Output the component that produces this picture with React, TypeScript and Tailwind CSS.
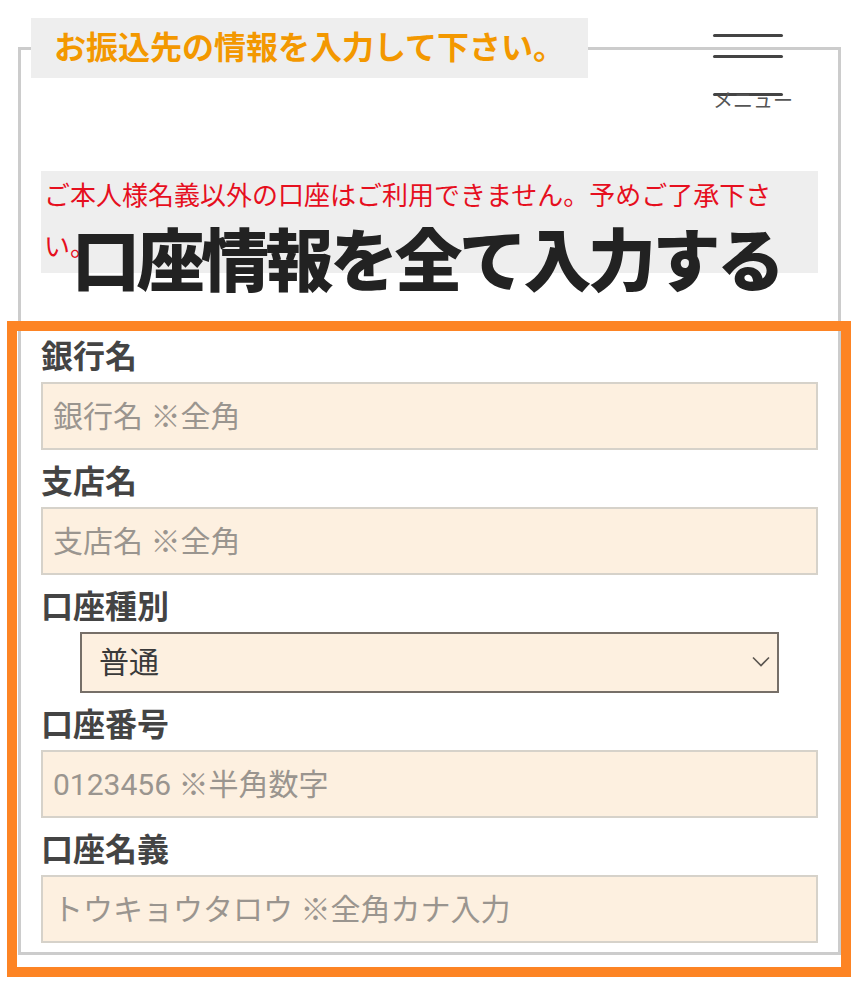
import React from "react";

type Field = {
    label: string;
    placeholder?: string;
    select?: string;
};

const fields: Field[] = [
    { label: "銀行名", placeholder: "銀行名 ※全角" },
    { label: "支店名", placeholder: "支店名 ※全角" },
    { label: "口座種別", select: "普通" },
    { label: "口座番号", placeholder: "0123456 ※半角数字" },
    { label: "口座名義", placeholder: "トウキョウタロウ ※全角カナ入力" },
];

const Chevron = () => (
    <svg
        width="18"
        height="11"
        viewBox="0 0 18 11"
        fill="none"
        stroke="#5a5550"
        strokeWidth="1.6"
        className="pointer-events-none absolute right-[9px] top-[24px]"
    >
        <polyline points="1,1.5 9,9.5 17,1.5" />
    </svg>
);

const FieldRow = ({ field }: { field: Field }) => {
    return (
        <div className="flex flex-col gap-[5px]">
            <label className="text-[32px] leading-[40px] font-bold text-[#444]">
                {field.label}
            </label>
            {field.select ? (
                <div className="relative ml-[39px] w-[699px]">
                    <select
                        defaultValue={field.select}
                        className="block w-full h-[61px] appearance-none border-2 border-[#766f68] bg-[#fdf0e0] pl-[17px] text-[30px] text-[#3a3a3a] outline-none"
                    >
                        <option>普通</option>
                        <option>当座</option>
                    </select>
                    <Chevron />
                </div>
            ) : (
                <input
                    type="text"
                    placeholder={field.placeholder}
                    className="block w-full h-[68px] border-2 border-[#d6d2ca] bg-[#fdf0e0] pl-[10px] text-[30px] text-[#333] placeholder:text-[#9a958f] outline-none"
                />
            )}
        </div>
    );
};

export default function App() {
    return (
        <div
            className="relative w-[858px] h-[989px] overflow-hidden bg-white"
            style={{ fontFamily: 'Roboto, "Noto Sans CJK JP", sans-serif' }}
        >
            <fieldset className="ml-[18px] mr-[17px] mt-[18px] border-[3px] border-[#cccccc] px-[20px] pb-[9px]">
                <legend className="-ml-[10px] h-[60px] bg-[#eeeeee] px-[23px] text-[32px] leading-[60px] font-bold text-[#f39800]">
                    お振込先の情報を入力して下さい。
                </legend>

                <div className="flex flex-col pt-[93px]">
                    <p className="bg-[#eeeeee] pl-[3px] pr-[40px] text-[26px] leading-[51px] text-[#e60f1e]">
                        ご本人様名義以外の口座はご利用できません。予めご了承下さい。
                    </p>

                    <div className="mt-[64px] flex flex-col gap-[12px]">
                        {fields.map((f) => (
                            <FieldRow key={f.label} field={f} />
                        ))}
                    </div>
                </div>
            </fieldset>

            {/* menu button, fixed over the page */}
            <div className="absolute left-[713px] top-[34px] flex w-[80px] flex-col">
                <div className="h-[3px] w-[70px] rounded-full bg-[#444]" />
                <div className="mt-[18px] h-[3px] w-[70px] rounded-full bg-[#444]" />
                <div className="mt-[35px] h-[3px] w-[70px] rounded-full bg-[#444]" />
                <div className="-mt-[5px] text-[20px] leading-[20px] text-[#555]">
                    メニュー
                </div>
            </div>

            {/* annotation laid over the screenshot */}
            <div className="absolute left-[72px] top-[229px] text-[68px] leading-none font-black tracking-[-3.5px] text-[#222]">
                口座情報を全て入力する
            </div>
            <div className="pointer-events-none absolute left-[7px] top-[321px] h-[656px] w-[844px] border-[10px] border-[#fd8424]" />
        </div>
    );
}
